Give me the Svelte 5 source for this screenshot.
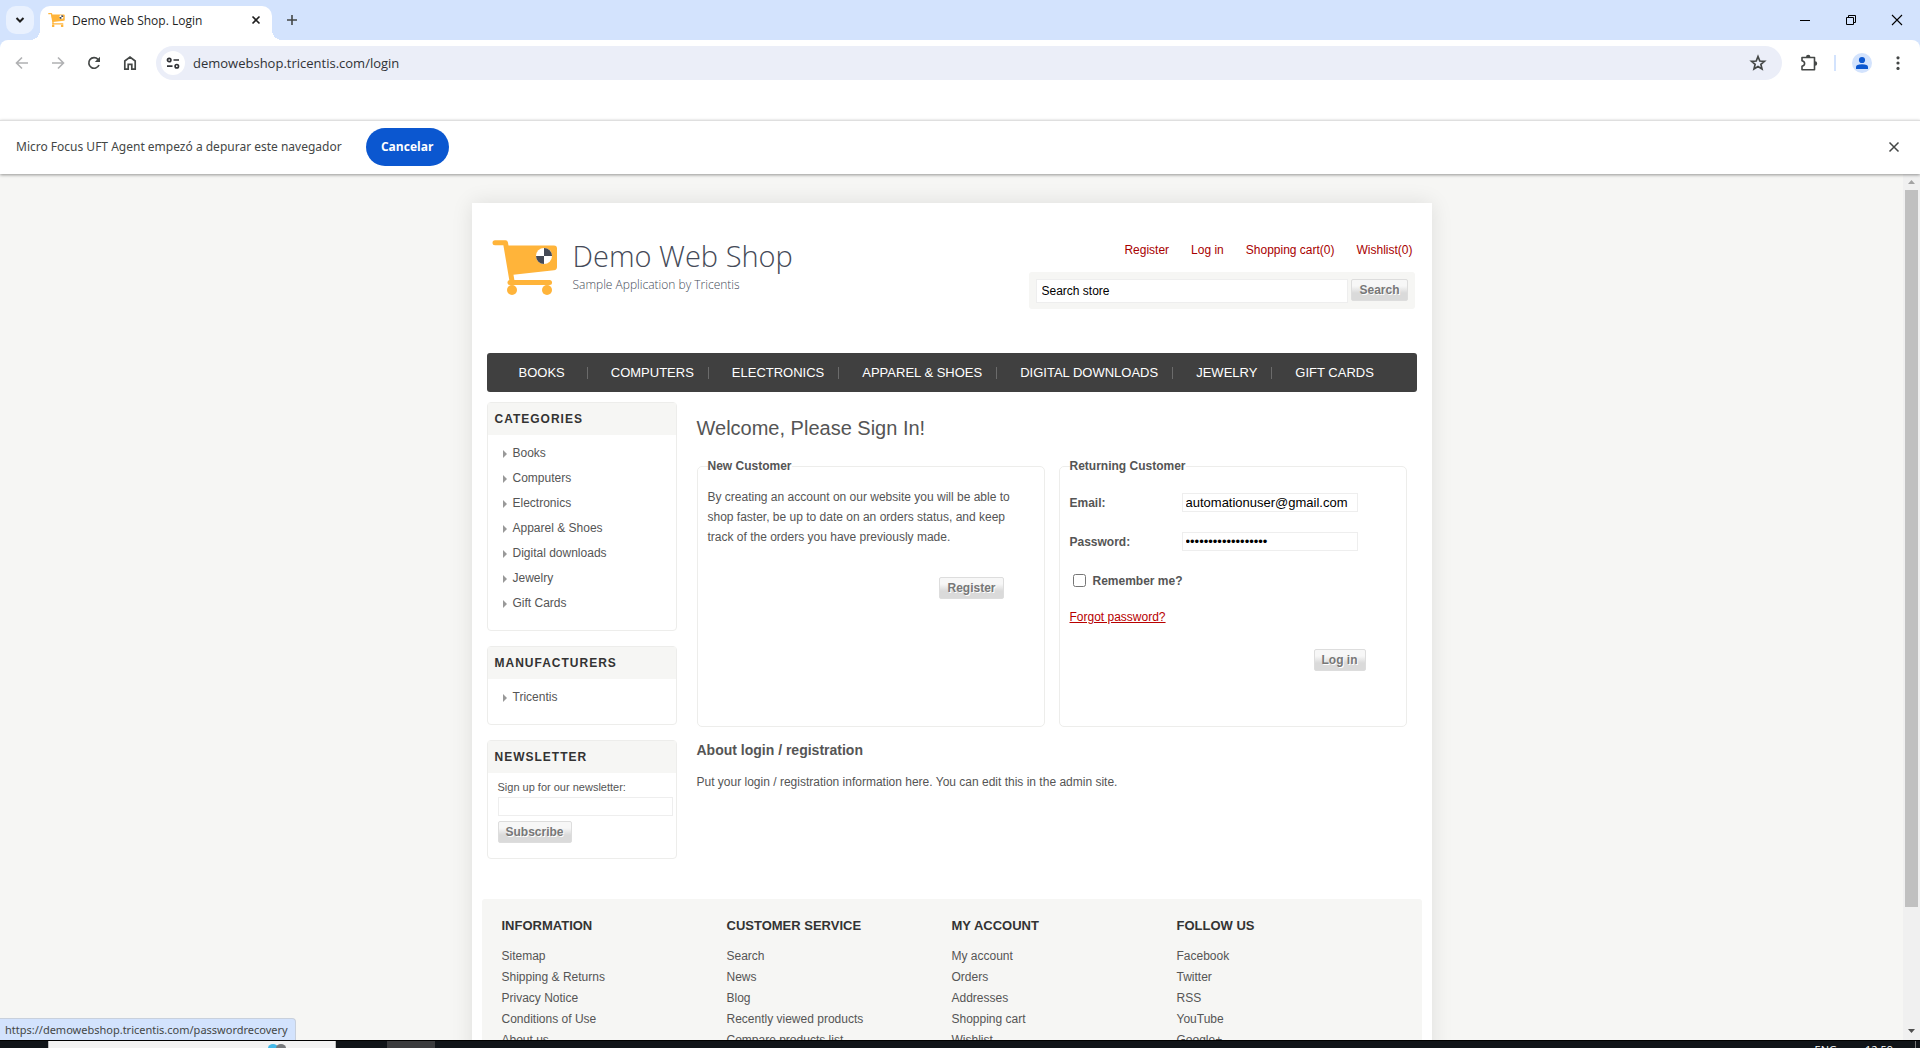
<script>
  const headerLinks = ['Register', 'Log in', 'Shopping cart(0)', 'Wishlist(0)'];
  const categories = ['Books', 'Computers', 'Electronics', 'Apparel & Shoes', 'Digital downloads', 'Jewelry', 'Gift Cards'];
  const blocks = [
    { title: 'Categories', items: categories },
    { title: 'Manufacturers', items: ['Tricentis'] }
  ];
  const footer = [
    { title: 'Information', items: ['Sitemap', 'Shipping & Returns', 'Privacy Notice', 'Conditions of Use', 'About us'] },
    { title: 'Customer service', items: ['Search', 'News', 'Blog', 'Recently viewed products', 'Compare products list'] },
    { title: 'My account', items: ['My account', 'Orders', 'Addresses', 'Shopping cart', 'Wishlist'] },
    { title: 'Follow us', items: ['Facebook', 'Twitter', 'RSS', 'YouTube', 'Google+'] }
  ];
  let search = $state('Search store');
  let email = $state('automationuser@gmail.com');
  let password = $state('automationuser1234');
  let remember = $state(false);
  let newsletter = $state('');
</script>

{#snippet cart()}
  <svg class="cart" viewBox="0 0 66 56" aria-hidden="true">
    <path d="M3 2.8H13.5L20 41" fill="none" stroke="#ffb43a" stroke-width="5" stroke-linecap="round" stroke-linejoin="round" />
    <path d="M12 5.5H62Q65 5.5 65 8.500V27Q65 30 62 30.200L19 35Z" fill="#ffb43a" />
    <path d="M18 42.500H57.500" stroke="#ffb43a" stroke-width="5" stroke-linecap="round" />
    <circle cx="20" cy="50" r="5" fill="#ffb43a" />
    <circle cx="55" cy="50" r="5" fill="#ffb43a" />
    <circle cx="52" cy="16" r="8" fill="#fff" />
    <path d="M52 16V8A8 8 0 0 1 60 16ZM52 16V24A8 8 0 0 1 44 16Z" fill="#454a57" />
  </svg>
{/snippet}

<div class="window">
  <header class="tabstrip">
    <button class="tab-search" aria-label="Search tabs">
      <svg width="10" height="10" viewBox="0 0 10 10"><path d="M1.500 3L5 6.500L8.500 3" fill="none" stroke="#1f1f1f" stroke-width="2" /></svg>
    </button>
    <div class="tab">
      <span class="favicon">{@render cart()}</span>
      <span class="tab-title">Demo Web Shop. Login</span>
      <button class="plain" aria-label="Close tab">
        <svg width="10" height="10" viewBox="0 0 10 10"><path d="M1.500 1.500L8.500 8.500M8.500 1.500L1.500 8.500" stroke="#1f1f1f" stroke-width="1.600" /></svg>
      </button>
    </div>
    <button class="plain new-tab" aria-label="New tab">
      <svg width="12" height="12" viewBox="0 0 12 12"><path d="M6 1V11M1 6H11" stroke="#444746" stroke-width="1.600" /></svg>
    </button>
    <div class="controls">
      <button class="plain" aria-label="Minimize"><svg width="12" height="12" viewBox="0 0 12 12"><path d="M1 6.500H11" stroke="#000" /></svg></button>
      <button class="plain" aria-label="Restore"><svg width="12" height="12" viewBox="0 0 12 12"><path d="M1.500 3.500H8.500V10.500H1.500ZM3.500 3V1.500H10.500V8.500H9" fill="none" stroke="#000" /></svg></button>
      <button class="plain" aria-label="Close"><svg width="12" height="12" viewBox="0 0 12 12"><path d="M1 1L11 11M11 1L1 11" stroke="#000" stroke-width="1.100" /></svg></button>
    </div>
  </header>

  <div class="toolbar">
    <div class="nav-buttons">
      <button class="plain" aria-label="Back"><svg width="16" height="16" viewBox="0 0 16 16"><path d="M14 8H3M8 2.500L2.500 8L8 13.500" fill="none" stroke="#b0b1b3" stroke-width="1.600" /></svg></button>
      <button class="plain" aria-label="Forward"><svg width="16" height="16" viewBox="0 0 16 16"><path d="M2 8H13M8 2.500L13.500 8L8 13.500" fill="none" stroke="#b0b1b3" stroke-width="1.600" /></svg></button>
      <button class="plain" aria-label="Reload"><svg width="16" height="16" viewBox="0 0 16 16"><path d="M13 10A5.300 5.300 0 1 1 12 4.300L13.300 5.800" fill="none" stroke="#444746" stroke-width="1.700" /><path d="M14 1.800V7H8.800Z" fill="#444746" /></svg></button>
      <button class="plain" aria-label="Home"><svg width="16" height="16" viewBox="0 0 16 16"><path d="M2.800 14.200V6L8 2L13.200 6V14.200H9.800V9.300H6.200V14.200Z" fill="none" stroke="#444746" stroke-width="1.700" /></svg></button>
    </div>
    <div class="omnibox">
      <button class="site-info" aria-label="Site information">
        <svg width="14" height="12" viewBox="0 0 14 12" fill="none" stroke="#303236" stroke-width="1.700"><circle cx="3.200" cy="3" r="1.700" /><path d="M7.500 3H13M1 9.200H6.500" /><circle cx="10.800" cy="9.200" r="1.700" /></svg>
      </button>
      <input class="url" aria-label="Address" value="demowebshop.tricentis.com/login" />
      <button class="plain" aria-label="Bookmark"><svg width="18" height="18" viewBox="0 0 18 18"><path d="M9 2.500L10.800 7L15.500 7.300L11.900 10.400L13 15L9 12.500L5 15L6.100 10.400L2.500 7.300L7.200 7Z" fill="none" stroke="#444746" stroke-width="1.700" /></svg></button>
    </div>
    <div class="toolbar-right">
      <button class="plain" aria-label="Extensions"><svg width="18" height="18" viewBox="0 0 18 18"><path d="M2 3.500H14.500V15.800H2V12.300Q4.600 11.500 4.600 9.500T2 6.800Z" fill="none" stroke="#444746" stroke-width="1.600" stroke-linejoin="round" /><path d="M6 3A2.200 2.200 0 0 1 10.400 3ZM15 7.300A2.200 2.200 0 0 1 15 11.700Z" fill="#444746" /></svg></button>
      <span class="divider"></span>
      <button class="profile" aria-label="Profile"><svg width="14" height="14" viewBox="0 0 14 14" fill="#0b57d0"><circle cx="7" cy="4" r="3.100" /><path d="M1 13V11Q1 8.500 7 8.300Q13 8.500 13 11V13Z" /></svg></button>
      <button class="plain" aria-label="Menu"><svg width="16" height="16" viewBox="0 0 16 16" fill="#444746"><circle cx="8" cy="2.800" r="1.600" /><circle cx="8" cy="8" r="1.600" /><circle cx="8" cy="13.400" r="1.600" /></svg></button>
    </div>
  </div>

  <div class="infobar">
    <span>Micro Focus UFT Agent empezó a depurar este navegador</span>
    <button class="cancel">Cancelar</button>
    <button class="plain dismiss" aria-label="Close notice"><svg width="12" height="12" viewBox="0 0 12 12"><path d="M1.500 1.500L10.500 10.500M10.500 1.500L1.500 10.500" stroke="#444746" stroke-width="1.500" /></svg></button>
  </div>

  <div class="viewport">
    <div class="canvas">
      <div class="page">
        <div class="header">
          <a class="logo" href="#home">
            {@render cart()}
            <span class="brand"><span class="name">Demo Web Shop</span><span class="tagline">Sample Application by Tricentis</span></span>
          </a>
          <div class="header-side">
            <nav class="header-links" aria-label="Account">
              {#each headerLinks as link}<a href="#account">{link}</a>{/each}
            </nav>
            <form class="search">
              <input aria-label="Search store" bind:value={search} />
              <button type="button" class="btn">Search</button>
            </form>
          </div>
        </div>

        <nav class="menu" aria-label="Shop">
          {#each categories as item}<a href="#shop">{item}</a>{/each}
        </nav>

        <div class="columns">
          <aside>
            {#each blocks as block}
              <section class="block">
                <h2>{block.title}</h2>
                <ul>
                  {#each block.items as item}<li><a href="#list">{item}</a></li>{/each}
                </ul>
              </section>
            {/each}
            <section class="block">
              <h2>Newsletter</h2>
              <form class="newsletter">
                <label for="newsletter">Sign up for our newsletter:</label>
                <input id="newsletter" bind:value={newsletter} />
                <button type="button" class="btn">Subscribe</button>
              </form>
            </section>
          </aside>

          <main>
            <h1>Welcome, Please Sign In!</h1>
            <div class="panels">
              <fieldset>
                <legend>New Customer</legend>
                <p>By creating an account on our website you will be able to shop faster, be up to date on an orders status, and keep track of the orders you have previously made.</p>
                <div class="actions register"><button type="button" class="btn">Register</button></div>
              </fieldset>
              <fieldset>
                <legend>Returning Customer</legend>
                <div class="row"><label for="email">Email:</label><input id="email" type="email" bind:value={email} /></div>
                <div class="row"><label for="password">Password:</label><input id="password" type="password" bind:value={password} /></div>
                <div class="remember"><input id="remember" type="checkbox" bind:checked={remember} /><label for="remember">Remember me?</label></div>
                <a class="forgot" href="#passwordrecovery">Forgot password?</a>
                <div class="actions"><button type="button" class="btn">Log in</button></div>
              </fieldset>
            </div>
            <h3>About login / registration</h3>
            <p>Put your login / registration information here. You can edit this in the admin site.</p>
          </main>
        </div>

        <footer>
          {#each footer as column}
            <div>
              <h3>{column.title}</h3>
              <ul>
                {#each column.items as item}<li><a href="#footer">{item}</a></li>{/each}
              </ul>
            </div>
          {/each}
        </footer>
      </div>
    </div>
    <div class="scrollbar">
      <svg width="17" height="16" viewBox="0 0 17 16"><path d="M5 10H12L8.500 6Z" fill="#a3a3a3" /></svg>
      <span class="track"><span class="thumb"></span></span>
      <svg width="17" height="16" viewBox="0 0 17 16"><path d="M5 5H12L8.500 9Z" fill="#505050" /></svg>
    </div>
    <div class="status">https://demowebshop.tricentis.com/passwordrecovery</div>
  </div>

  <div class="taskbar">
    <div class="task-search">
      <svg width="20" height="8" viewBox="0 0 20 8"><ellipse cx="6" cy="7" rx="5" ry="4" fill="#41b8e8" /><ellipse cx="14" cy="7" rx="5" ry="4" fill="#77797c" /></svg>
    </div>
    <div class="task-active"></div>
    <div class="tray"><span>ENG</span><span>12:59</span></div>
    <div class="desktop-edge"></div>
  </div>
</div>

<style>
  :global(body) { margin: 0; }
  * { box-sizing: border-box; }
  h1, h2, h3, p, ul { margin: 0; padding: 0; }
  ul { list-style: none; }
  a { color: inherit; text-decoration: none; }
  button { font-family: inherit; }
  svg { display: block; flex: none; }

  .window {
    height: 100vh;
    display: flex;
    flex-direction: column;
    overflow: hidden;
    background: #d3e3fd;
    font-family: "Noto Sans", "Open Sans", sans-serif;
    font-size: 12px;
    color: #1f1f1f;
  }
  .plain { border: 0; padding: 0; background: none; display: grid; place-items: center; }

  .tabstrip { height: 40px; flex: none; display: flex; padding-left: 6px; }
  .tab-search {
    width: 28px; height: 28px; margin-top: 6px; border: 0; padding: 0; border-radius: 10px;
    background: #e9f1fe; display: grid; place-items: center;
  }
  .tab {
    width: 232px; margin: 6px 0 0 6px; padding: 0 11px 6px 8px; border-radius: 10px 10px 0 0;
    background: #fff; display: flex; align-items: center; gap: 7px; position: relative;
  }
  /* Flared feet joining the active tab to the toolbar */
  .tab::before, .tab::after { content: ""; position: absolute; bottom: 0; width: 10px; height: 10px; }
  .tab::before { right: 100%; background: radial-gradient(circle at 0 0, transparent 10px, #fff 10px); }
  .tab::after { left: 100%; background: radial-gradient(circle at 100% 0, transparent 10px, #fff 10px); }
  .favicon { width: 17px; }
  .cart { width: 100%; }
  .tab-title { flex: 1; font-family: "Open Sans", sans-serif; white-space: nowrap; }
  .new-tab { margin-left: 14px; }
  .controls { margin-left: auto; display: flex; gap: 34px; padding-right: 17px; }

  .toolbar {
    flex: none; height: 80px; padding: 6px 14px 0 14px;
    border-radius: 8px 8px 0 0; background: #fff;
    display: flex; align-items: flex-start;
  }
  .nav-buttons { display: flex; gap: 20px; height: 34px; align-items: center; margin-right: 18px; }
  .omnibox {
    flex: 1; height: 34px; border-radius: 17px; background: #ebeef8; display: flex;
    align-items: center; padding: 0 15px 0 5px; gap: 8px;
  }
  .site-info { width: 24px; height: 24px; border: 0; padding: 0; border-radius: 12px; background: #fff; display: grid; place-items: center; }
  .url { flex: 1; border: 0; padding: 0; background: none; font: 13px "Open Sans", sans-serif; color: #303236; }
  .toolbar-right { display: flex; align-items: center; height: 34px; margin-left: 18px; }
  .divider { width: 2px; height: 16px; background: #d3e3fd; margin: 0 16px; }
  .profile { width: 20px; height: 20px; border: 0; padding: 0; border-radius: 10px; background: #d3e3fd; display: grid; place-items: center; margin-right: 18px; }

  .infobar {
    flex: none; height: 54px; padding: 0 20px 2px 16px; display: flex; align-items: center;
    font: 12px "Noto Sans", sans-serif; color: #444746; position: relative; z-index: 1;
    background: #fff; border-top: 1px solid #dfdfdf;
    box-shadow: 0 1px 3px rgba(0, 0, 0, 0.4);
  }
  .cancel {
    width: 83px; height: 38px; border: 0; border-radius: 19px; margin-left: 24px; padding: 0;
    background: #0b57d0; color: #fff; font: 700 12px "Open Sans", sans-serif;
  }
  .dismiss { margin-left: auto; }

  .viewport {
    flex: 1; min-height: 0; display: flex; position: relative; background: #f6f6f4;
    font-family: "Liberation Sans", Arial, sans-serif; color: #555;
  }
  .canvas { flex: 1; overflow: hidden; padding-top: 29px; }
  .page {
    max-width: 960px; margin: 0 auto; background: #fff; padding: 0 10px 10px;
    box-shadow: 0 0 20px rgba(0, 0, 0, 0.1);
  }
  .header { display: flex; justify-content: space-between; padding: 37px 7px 44px 10px; }
  .logo { display: flex; gap: 15px; align-items: flex-start; font-family: "Open Sans", sans-serif; font-weight: 300; }
  .logo .cart { width: 66px; height: 56px; }
  .brand { display: flex; flex-direction: column; color: #454a57; }
  .name { font-size: 29px; line-height: 32px; }
  .tagline { font-size: 12px; line-height: 26px; }
  .header-side { width: 386px; }
  .header-links { display: flex; justify-content: flex-end; gap: 22px; padding-right: 2px; color: #a80000; line-height: 20px; margin-bottom: 12px; }
  .search { display: flex; gap: 3px; align-items: flex-start; background: #f6f6f4; border-radius: 3px; padding: 7px 7px 6px; }
  .search input { flex: 1; height: 24px; padding: 0 5px; }
  input { font-family: inherit; }
  .search input, .row input, .newsletter input { min-width: 0; border: 1px solid #eee; background: #fff; color: #000; font-size: 12px; }
  .btn {
    height: 22px; padding: 0 7px; border: 1px solid #ddd; border-radius: 2px; color: #777;
    background: linear-gradient(#f7f7f7 30%, #dadada 65%); font-size: 12px; font-weight: 700;
    text-shadow: 1px 1px 0 #fff;
  }

  .menu { display: flex; margin: 0 5px 10px; background: #404040; border-radius: 3px; padding: 14px 32px 13px; }
  .menu a { color: #fff; font-size: 13px; line-height: 12px; text-transform: uppercase; padding-right: 14px; margin-right: 23px; border-right: 1px solid #6b6b6b; white-space: nowrap; }
  .menu a:first-child { padding-right: 22px; }
  .menu a:last-child { border: 0; margin: 0; padding: 0; }

  .columns { display: flex; gap: 20px; padding: 0 15px 40px 5px; }
  aside { width: 190px; display: flex; flex-direction: column; gap: 15px; }
  .block { border: 1px solid #ededeb; border-radius: 4px; }
  .block h2 { background: #f6f6f4; color: #333; font-size: 12px; line-height: 32px; letter-spacing: 1px; text-transform: uppercase; padding-left: 7px; }
  .block ul { padding: 6px 0 14px 15px; line-height: 25px; }
  .block li { display: flex; align-items: center; gap: 6px; }
  .block li::before { content: ""; border-left: 4px solid #999; border-top: 4px solid transparent; border-bottom: 4px solid transparent; }
  .newsletter { display: flex; flex-direction: column; align-items: flex-start; padding: 6px 3px 15px 10px; font-size: 11px; line-height: 16px; }
  .newsletter input { width: 100%; height: 19px; margin: 2px 0 5px; }

  main { flex: 1; min-width: 0; line-height: 20px; }
  h1 { font-size: 20px; font-weight: 400; line-height: 24px; padding: 14px 0 16px; }
  .panels { display: grid; grid-template-columns: 1fr 1fr; gap: 14px; margin-bottom: 13px; }
  fieldset { margin: 0; min-width: 0; min-height: 271px; border: 1px solid #ededeb; border-radius: 5px; padding: 0 10px 10px; }
  legend { padding: 0; font-weight: 700; line-height: 20px; }
  fieldset p { padding: 11px 20px 0 0; }
  .actions { display: flex; justify-content: flex-end; padding: 22px 30px 0 0; }
  .register { padding-top: 30px; }
  .row { display: flex; align-items: center; height: 39px; font-weight: 700; }
  .row:nth-of-type(1) { margin-top: 7px; }
  .row label { width: 112px; }
  .row input { width: 176px; height: 19px; padding: 0 3px; font-size: 13px; }
  .remember { display: flex; align-items: center; height: 39px; gap: 7px; font-weight: 700; }
  .remember input { width: 13px; height: 13px; margin: 0 0 0 3px; }
  .forgot { display: inline-block; margin-top: 7px; color: #b80000; text-decoration: underline; }
  main h3 { font-size: 14px; line-height: 20px; margin-bottom: 12px; }

  footer { display: grid; grid-template-columns: repeat(4, 1fr); background: #f6f6f4; border-radius: 3px; padding: 17px 20px; }
  footer h3 { font-size: 13px; line-height: 20px; color: #333; text-transform: uppercase; margin-bottom: 10px; }
  footer ul { line-height: 21px; }

  .scrollbar { width: 17px; background: #f0f0f0; display: flex; flex-direction: column; }
  .track { flex: 1; padding: 0 2px; }
  .thumb { display: block; height: 86%; background: #c0c0c0; }
  .status {
    position: absolute; left: 0; bottom: 0; height: 22px; padding: 0 7px 0 5px; border-radius: 0 4px 0 0;
    background: #d3e3fd; border: 1px solid #c8d0dc; border-width: 1px 1px 0 0; color: #444746;
    font: 11px/22px "Noto Sans", sans-serif;
  }

  .taskbar { flex: none; height: 8px; overflow: hidden; background: #101418; border-top: 1px solid #000; display: flex; }
  .task-search { width: 288px; margin-left: 48px; background: #f2f2f2; border: 1px solid #bbb; border-width: 0 1px; padding-left: 218px; }
  .task-active { width: 48px; margin-left: 51px; background: #3a3b3d; }
  .tray { margin-left: auto; display: flex; gap: 28px; color: #fff; font: 11px/18px "Open Sans", sans-serif; padding-right: 22px; }
  .desktop-edge { width: 5px; border-left: 1px solid #777; }
</style>
